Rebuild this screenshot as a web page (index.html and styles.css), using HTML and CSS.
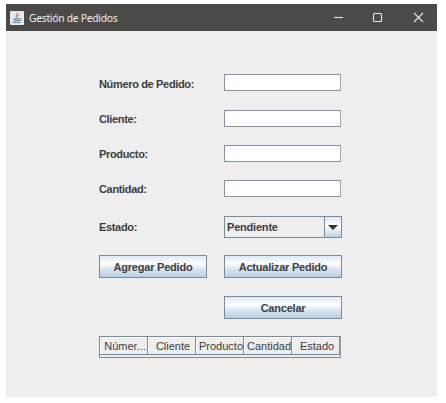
FILE: index.html
```html
<!DOCTYPE html>
<html lang="es">
<head>
<meta charset="utf-8">
<title>Gestión de Pedidos</title>
<link rel="stylesheet" href="styles.css">
</head>
<body>
<main class="window">
  <header class="titlebar">
    <svg class="app-icon" width="14" height="14" viewBox="0 0 14 14" fill="none">
      <rect width="14" height="14" rx="1" fill="#e4eaef"/>
      <path d="M7.6 1.5C8.2 3.4 4.6 4.2 6.4 7M9 3.7C6.8 4.8 7 5.5 7.6 6.8" stroke="#dc8b4d" stroke-width="1.1"/>
      <path d="M3.5 7.9h6M4 9.4h5M2.5 11.4h8M9.6 7.7c2.6-.6 2.3 1.9-.4 2.2" stroke="#4d7899" stroke-width="1"/>
    </svg>
    <h1 class="title">Gestión de Pedidos</h1>
    <svg class="controls" width="92" height="12" viewBox="0 0 92 12" fill="none" stroke="#e8e8e6" stroke-width="1.1">
      <path d="M0 5.5h9"/>
      <rect x="39.5" y="1.5" width="8" height="8" rx="1"/>
      <path d="M80 1l9 9M89 1l-9 9"/>
    </svg>
  </header>
  <form class="form">
    <label for="numero">Número de Pedido:</label><input class="field first" id="numero" type="text">
    <label for="cliente">Cliente:</label><input class="field" id="cliente" type="text">
    <label for="producto">Producto:</label><input class="field" id="producto" type="text">
    <label for="cantidad">Cantidad:</label><input class="field" id="cantidad" type="text">
    <span class="combo-label">Estado:</span>
    <div class="combo">
      <span class="combo-value">Pendiente</span>
      <span class="combo-arrow"><svg width="10" height="5" viewBox="0 0 10 5"><path d="M0 0h10L5 5z" fill="#333"/></svg></span>
    </div>
    <button class="button add" type="button">Agregar Pedido</button>
    <button class="button" type="button">Actualizar Pedido</button>
    <button class="button cancel" type="button">Cancelar</button>
  </form>
  <div class="table">
    <div class="cell">Númer...</div>
    <div class="cell">Cliente</div>
    <div class="cell">Producto</div>
    <div class="cell">Cantidad</div>
    <div class="cell">Estado</div>
  </div>
</main>
</body>
</html>
```
FILE: styles.css
```css
* { box-sizing: border-box; }
body {
  margin: 0;
  padding: 4px 9px 6px 6px;
  background: #fff;
  color: #3d3d3d;
  font: 11px "Liberation Sans", Arial, sans-serif;
}
.window { height: 393px; background: #eee; }
.titlebar {
  display: flex;
  align-items: center;
  height: 27px;
  padding: 0 11px 0 4px;
  background: #4b4a48;
}
.title {
  margin: 0 auto 0 5px;
  color: #f0f0ee;
  font: 10.3px "Noto Sans", "Open Sans", sans-serif;
  letter-spacing: -0.27px;
}
.form {
  display: grid;
  grid-template-columns: 125px 118px;
  grid-template-rows: 18px 17px 17px 17px 22px 23px 23px;
  row-gap: 18px;
  align-items: center;
  padding: 43px 0 0 93px;
  font-size: 11px;
  font-weight: bold;
  letter-spacing: -0.34px;
}
.form label { padding-top: 1px; }
.field {
  width: 117px;
  height: 17px;
  margin: 0;
  padding: 0 3px;
  border: 1px solid #8695a5;
  border-right-color: #9aa7b4;
  background: #fff;
  font: inherit;
}
.first { align-self: start; }
.combo-label { padding-top: 2px; }
.combo {
  display: flex;
  height: 22px;
  margin-top: 2px;
  border: 1px solid #7a8a99;
}
.combo-value {
  flex: 1;
  padding-left: 2px;
  line-height: 20px;
  letter-spacing: -0.2px;
}
.combo-arrow {
  display: flex;
  align-items: center;
  justify-content: center;
  width: 17px;
  border-left: 1px solid #7a8a99;
  background: linear-gradient(#dce8f3, #fff 45%, #b8cfe5);
}
.button {
  height: 23px;
  padding: 0;
  border: 1px solid #7a8a99;
  background: linear-gradient(#dce8f3, #fff 35%, #dce7f1 60%, #b8cfe5);
  color: #3d3d3d;
  font: inherit;
  letter-spacing: -0.22px;
}
.add { width: 108px; }
.cancel { grid-column: 2; }
.table {
  display: grid;
  grid-template-columns: repeat(5, 48px);
  width: 242px;
  height: 22px;
  margin: 17px 0 0 93px;
  border: 1px solid #7a8a99;
  border-right-color: #98a5b0;
}
.cell {
  height: 18px;
  padding-left: 3px;
  border-right: 1px solid #7a8a99;
  border-bottom: 1px solid #7a8a99;
  box-shadow: inset 1px 1px #fff;
  line-height: 19px;
  text-align: center;
  white-space: nowrap;
}
```
